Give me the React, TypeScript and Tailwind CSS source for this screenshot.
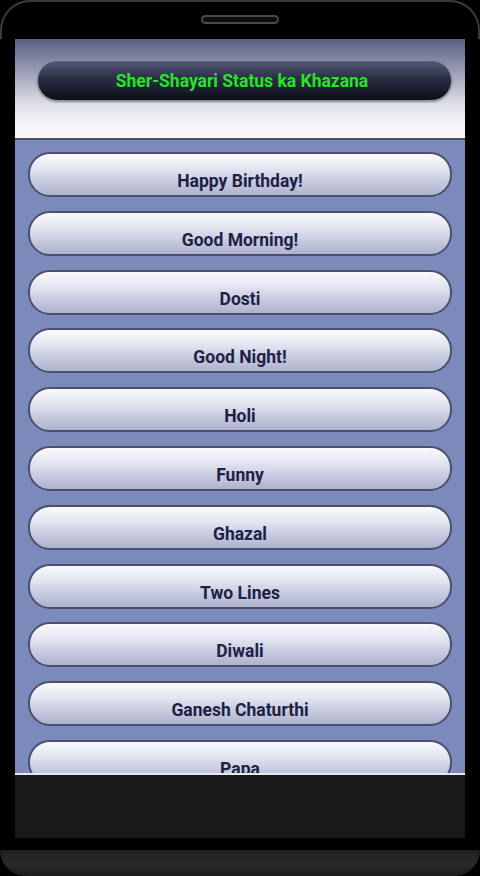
import React from "react";

const items = [
  "Happy Birthday!",
  "Good Morning!",
  "Dosti",
  "Good Night!",
  "Holi",
  "Funny",
  "Ghazal",
  "Two Lines",
  "Diwali",
  "Ganesh Chaturthi",
  "Papa",
];

export default function App() {
  return (
    <div
      className="w-[480px] h-[876px] bg-black flex flex-col overflow-hidden"
      style={{ fontFamily: "Roboto, 'Noto Sans', sans-serif" }}
    >
      {/* top bezel */}
      <div className="h-[39px] shrink-0 rounded-t-[30px] border-t-2 border-x-2 border-[#3a3a3a] flex justify-center">
        <div className="mt-[13px] w-[78px] h-[9px] rounded-full border-2 border-[#4a4a4a] bg-[#0c0c0c]" />
      </div>

      {/* screen */}
      <div className="mx-[15px] h-[799px] shrink-0 flex flex-col">
        {/* header */}
        <div className="h-[99px] shrink-0 bg-[linear-gradient(to_bottom,#5a5f82_0%,#9fa3b9_35%,#dcdde5_65%,#f4f4f7_85%,#fafafc_100%)] pt-[21px] pl-[22px] pr-[13px]">
          <div className="h-[41px] rounded-full border border-[#8e91a3] bg-[linear-gradient(to_bottom,#555a7a_0%,#2a2e44_45%,#0c0e18_100%)] shadow-[0_1px_2px_rgba(0,0,0,0.4)] flex items-center justify-center">
            <span className="text-[#27e427] text-[17.5px] font-bold leading-[20px] -ml-[5px]">
              Sher-Shayari Status ka Khazana
            </span>
          </div>
        </div>
        <div className="h-[2px] shrink-0 bg-[#4a4f6c]" />

        {/* list */}
        <div className="h-[633px] shrink-0 overflow-hidden bg-[#7b89bb] pt-[12px] px-[13px] flex flex-col gap-[13.8px]">
          {items.map((t) => (
            <div
              key={t}
              className="h-[45px] shrink-0 rounded-[22px] border-2 border-[#4a4f70] bg-[linear-gradient(to_bottom,#fbfbfd_0%,#e3e5f0_35%,#c5c9de_70%,#aeb3ce_100%)] flex justify-center pt-[17px]"
            >
              <span className="text-[#1d2146] text-[17.5px] font-bold leading-[20px]">
                {t}
              </span>
            </div>
          ))}
        </div>
        <div className="h-[2px] shrink-0 bg-[#e8e9f0]" />
        <div className="flex-1 bg-[#181818]" />
      </div>

      {/* bottom */}
      <div className="h-[12px] shrink-0" />
      <div className="flex-1 rounded-b-[26px] bg-[linear-gradient(to_bottom,#202020,#2a2a2a_50%,#1c1c1c)]" />
    </div>
  );
}
